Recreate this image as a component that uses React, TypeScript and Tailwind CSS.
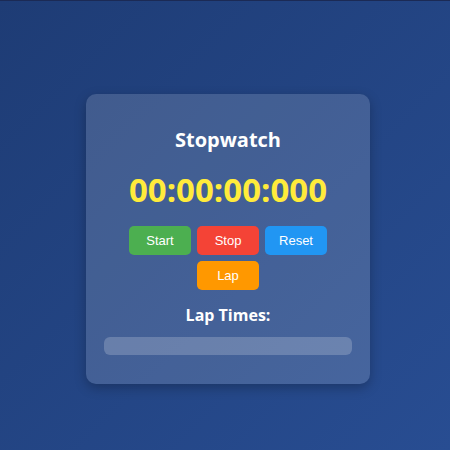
import { useState, useEffect, useRef } from 'react';

const pad = (n: number, w = 2) => n.toString().padStart(w, '0');

const formatTime = (ms: number) => {
  const h = Math.floor(ms / 3600000);
  const m = Math.floor((ms % 3600000) / 60000);
  const s = Math.floor((ms % 60000) / 1000);
  const milli = ms % 1000;
  return `${pad(h)}:${pad(m)}:${pad(s)}:${pad(milli, 3)}`;
};

const Stopwatch = () => {
  const [elapsed, setElapsed] = useState(0);
  const [running, setRunning] = useState(false);
  const [laps, setLaps] = useState<number[]>([]);
  const startRef = useRef(0);

  useEffect(() => {
    if (!running) return;
    startRef.current = Date.now() - elapsed;
    const interval = setInterval(() => {
      setElapsed(Date.now() - startRef.current);
    }, 10);
    return () => clearInterval(interval);
    // eslint-disable-next-line react-hooks/exhaustive-deps
  }, [running]);

  const reset = () => {
    setRunning(false);
    setElapsed(0);
    setLaps([]);
  };

  const btn = 'w-[62px] h-[29px] rounded-[5px] text-white text-[13px] cursor-pointer';

  return (
    <div
      className="min-h-[450px] w-full border-t border-[#1b2a55] bg-gradient-to-br from-[#1e3c75] to-[#284d92] pt-[93px] pl-[6px]"
      style={{ fontFamily: '"Open Sans", sans-serif' }}
    >
      <div className="mx-auto w-[284px] rounded-[10px] bg-white/15 px-[18px] pt-[31px] pb-[29px] shadow-[0_4px_12px_rgba(0,0,0,0.25)] text-center">
        <h2 className="text-[20px] leading-[30px] font-bold text-white">Stopwatch</h2>
        <div className="mt-[15px] text-[33px] leading-[40px] font-bold text-[#ffeb3b]">
          {formatTime(elapsed)}
        </div>

        {/* Controls */}
        <div
          className="mt-[16px] flex flex-wrap justify-center gap-x-[6px] gap-y-[6px] px-[25px]"
          style={{ fontFamily: '"Liberation Sans", Arial, sans-serif' }}
        >
          <button onClick={() => setRunning(true)} className={`${btn} bg-[#4caf50]`}>Start</button>
          <button onClick={() => setRunning(false)} className={`${btn} bg-[#f44336]`}>Stop</button>
          <button onClick={reset} className={`${btn} bg-[#2196f3]`}>Reset</button>
          <button
            onClick={() => running && setLaps(prev => [...prev, elapsed])}
            className={`${btn} bg-[#ff9800]`}
          >
            Lap
          </button>
        </div>

        <h3 className="mt-[13px] text-[16px] leading-[24px] font-bold text-white">Lap Times:</h3>
        <ul className="mt-[10px] min-h-[18px] rounded-[6px] bg-white/20 text-white text-sm">
          {laps.map((lap, i) => (
            <li key={i} className="px-3 py-1">
              Lap {i + 1}: {formatTime(lap)}
            </li>
          ))}
        </ul>
      </div>
    </div>
  );
};

export default Stopwatch;
